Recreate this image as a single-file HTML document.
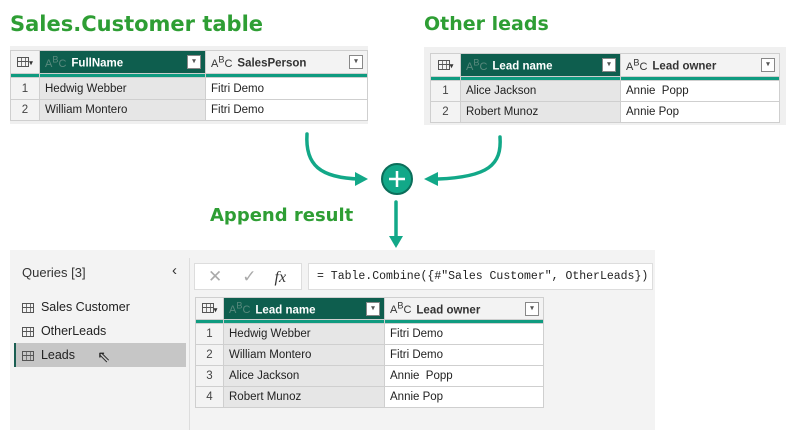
<!DOCTYPE html>
<html><head><style>
body{margin:0;width:796px;height:438px;background:#fff;position:relative;overflow:hidden;font-family:"Liberation Sans",sans-serif;}
.abs{position:absolute}
.title{color:#2e9e34;font-weight:bold;font-size:20px;font-family:"DejaVu Sans","Liberation Sans",sans-serif}
table{border-collapse:collapse;position:absolute;font-size:11.5px;color:#222;}
td{border:1px solid #cfcfcf;padding:0 0 0 5px;white-space:nowrap;}
td.i{text-align:center;padding:0;color:#444;background:#f3f3f3}
td.g{background:#e6e6e6}
tr.h td{background:#f3f3f3;font-weight:bold;color:#333;position:relative}
tr.h td.sel{background:#0e5e4e;color:#fff}
tr.s td{height:3px;padding:0;background:#0f9b80;border-top:none;border-bottom:none}
.abc{font-size:11px;color:#333;font-weight:normal;margin-right:5px}
.sel .abc{color:#5a8a7e}
.dd{position:absolute;right:4px;top:4px;width:12px;height:12px;border:1px solid #888;background:#fff;font-size:7px;color:#555;text-align:center;line-height:12px}
.ti{display:inline-block;width:12px;height:10px;border:1px solid #555;background:linear-gradient(#555,#555) 0 3px/100% 1px no-repeat,linear-gradient(90deg,transparent 3px,#777 3px,#777 4px,transparent 4px,transparent 7px,#777 7px,#777 8px,transparent 8px);box-sizing:border-box;vertical-align:middle}
</style></head><body>
<div class="abs title" style="left:10px;top:12px;font-size:21px">Sales.Customer table</div>
<div class="abs title" style="left:424px;top:13px;font-size:19px">Other leads</div>
<div class="abs title" style="left:210px;top:205px;font-size:18px">Append result</div>

<div class="abs" style="left:10px;top:46px;width:358px;height:78px;background:#f0f0f0"></div>
<table style="left:10px;top:50px;width:358px">
<tr class="h" style="height:23px"><td class="i" style="width:28px"><span class="ti"></span><span style="font-size:7px">▾</span></td><td class="sel" style="width:160px"><span class="abc">A<sup>B</sup>C</span>FullName<span class="dd">▾</span></td><td><span class="abc">A<sup>B</sup>C</span>SalesPerson<span class="dd">▾</span></td></tr>
<tr class="s"><td></td><td></td><td></td></tr>
<tr style="height:22px"><td class="i">1</td><td class="g">Hedwig Webber</td><td style="background:#fff">Fitri Demo</td></tr>
<tr style="height:21px"><td class="i">2</td><td class="g">William Montero</td><td style="background:#fff">Fitri Demo</td></tr>
</table>

<div class="abs" style="left:424px;top:47px;width:362px;height:78px;background:#f0f0f0"></div>
<table style="left:430px;top:53px;width:350px">
<tr class="h" style="height:23px"><td class="i" style="width:29px"><span class="ti"></span><span style="font-size:7px">▾</span></td><td class="sel" style="width:154px"><span class="abc">A<sup>B</sup>C</span>Lead name<span class="dd">▾</span></td><td><span class="abc">A<sup>B</sup>C</span>Lead owner<span class="dd">▾</span></td></tr>
<tr class="s"><td></td><td></td><td></td></tr>
<tr style="height:21px"><td class="i">1</td><td class="g">Alice Jackson</td><td style="background:#fff">Annie &nbsp;Popp</td></tr>
<tr style="height:21px"><td class="i">2</td><td class="g">Robert Munoz</td><td style="background:#fff">Annie Pop</td></tr>
</table>

<svg class="abs" style="left:0;top:0" width="796" height="438">
<g stroke="#12a888" stroke-width="3.5" fill="none" stroke-linecap="round">
<path d="M307 134 C305 165 320 178 360 179"/>
<path d="M500 137 C502 165 488 177 438 179"/>
<path d="M396 202 L396 236"/>
</g>
<g fill="#12a888">
<path d="M368 179 L355 172 L355 186Z"/>
<path d="M424 179 L438 172 L438 186Z"/>
<path d="M396 248 L389 236 L403 236Z"/>
</g>
<circle cx="397" cy="179" r="15" fill="#12a888" stroke="#0b6e5a" stroke-width="2"/>
<path d="M397 171 V187 M389 179 H405" stroke="#fff" stroke-width="2.5"/>
</svg>

<div class="abs" style="left:10px;top:250px;width:645px;height:180px;background:#f3f3f3"></div>
<div class="abs" style="left:189px;top:258px;width:1px;height:172px;background:#ddd"></div>
<div class="abs" style="left:22px;top:265px;font-size:13px;color:#333">Queries [3]</div>
<div class="abs" style="left:172px;top:262px;font-size:15px;color:#333">‹</div>
<div class="abs" style="left:14px;top:343px;width:172px;height:24px;background:#c6c6c6;border-left:2px solid #1b5e52;box-sizing:border-box"></div>
<div class="abs" style="left:22px;top:295px;font-size:12.5px;color:#222;line-height:24px"><div><span class="ti"></span>&nbsp; Sales Customer</div><div><span class="ti"></span>&nbsp; OtherLeads</div><div><span class="ti"></span>&nbsp; Leads</div></div>
<div class="abs" style="left:97px;top:347px;font-size:16px;color:#222">⇖</div>

<div class="abs" style="left:194px;top:263px;width:108px;height:27px;background:#fff;border:1px solid #ddd;box-sizing:border-box;color:#aaa;font-size:17px;line-height:25px"><span style="margin-left:13px">✕</span><span style="margin-left:20px">✓</span><span style="margin-left:18px;color:#333;font-family:'Liberation Serif',serif;font-style:italic;font-size:16px">fx</span></div>
<div class="abs" style="left:308px;top:263px;width:345px;height:27px;background:#fff;border:1px solid #ddd;box-sizing:border-box;font-family:'Liberation Mono',monospace;font-size:11.5px;line-height:25px;padding-left:8px;color:#222;white-space:nowrap">= Table.Combine({#"Sales Customer", OtherLeads})</div>

<table style="left:195px;top:297px;width:349px">
<tr class="h" style="height:22px"><td class="i" style="width:27px"><span class="ti"></span><span style="font-size:7px">▾</span></td><td class="sel" style="width:155px"><span class="abc">A<sup>B</sup>C</span>Lead name<span class="dd">▾</span></td><td><span class="abc">A<sup>B</sup>C</span>Lead owner<span class="dd">▾</span></td></tr>
<tr class="s"><td></td><td></td><td></td></tr>
<tr style="height:21px"><td class="i">1</td><td class="g">Hedwig Webber</td><td style="background:#fff">Fitri Demo</td></tr>
<tr style="height:21px"><td class="i">2</td><td class="g">William Montero</td><td style="background:#fff">Fitri Demo</td></tr>
<tr style="height:21px"><td class="i">3</td><td class="g">Alice Jackson</td><td style="background:#fff">Annie &nbsp;Popp</td></tr>
<tr style="height:21px"><td class="i">4</td><td class="g">Robert Munoz</td><td style="background:#fff">Annie Pop</td></tr>
</table>
</body></html>
